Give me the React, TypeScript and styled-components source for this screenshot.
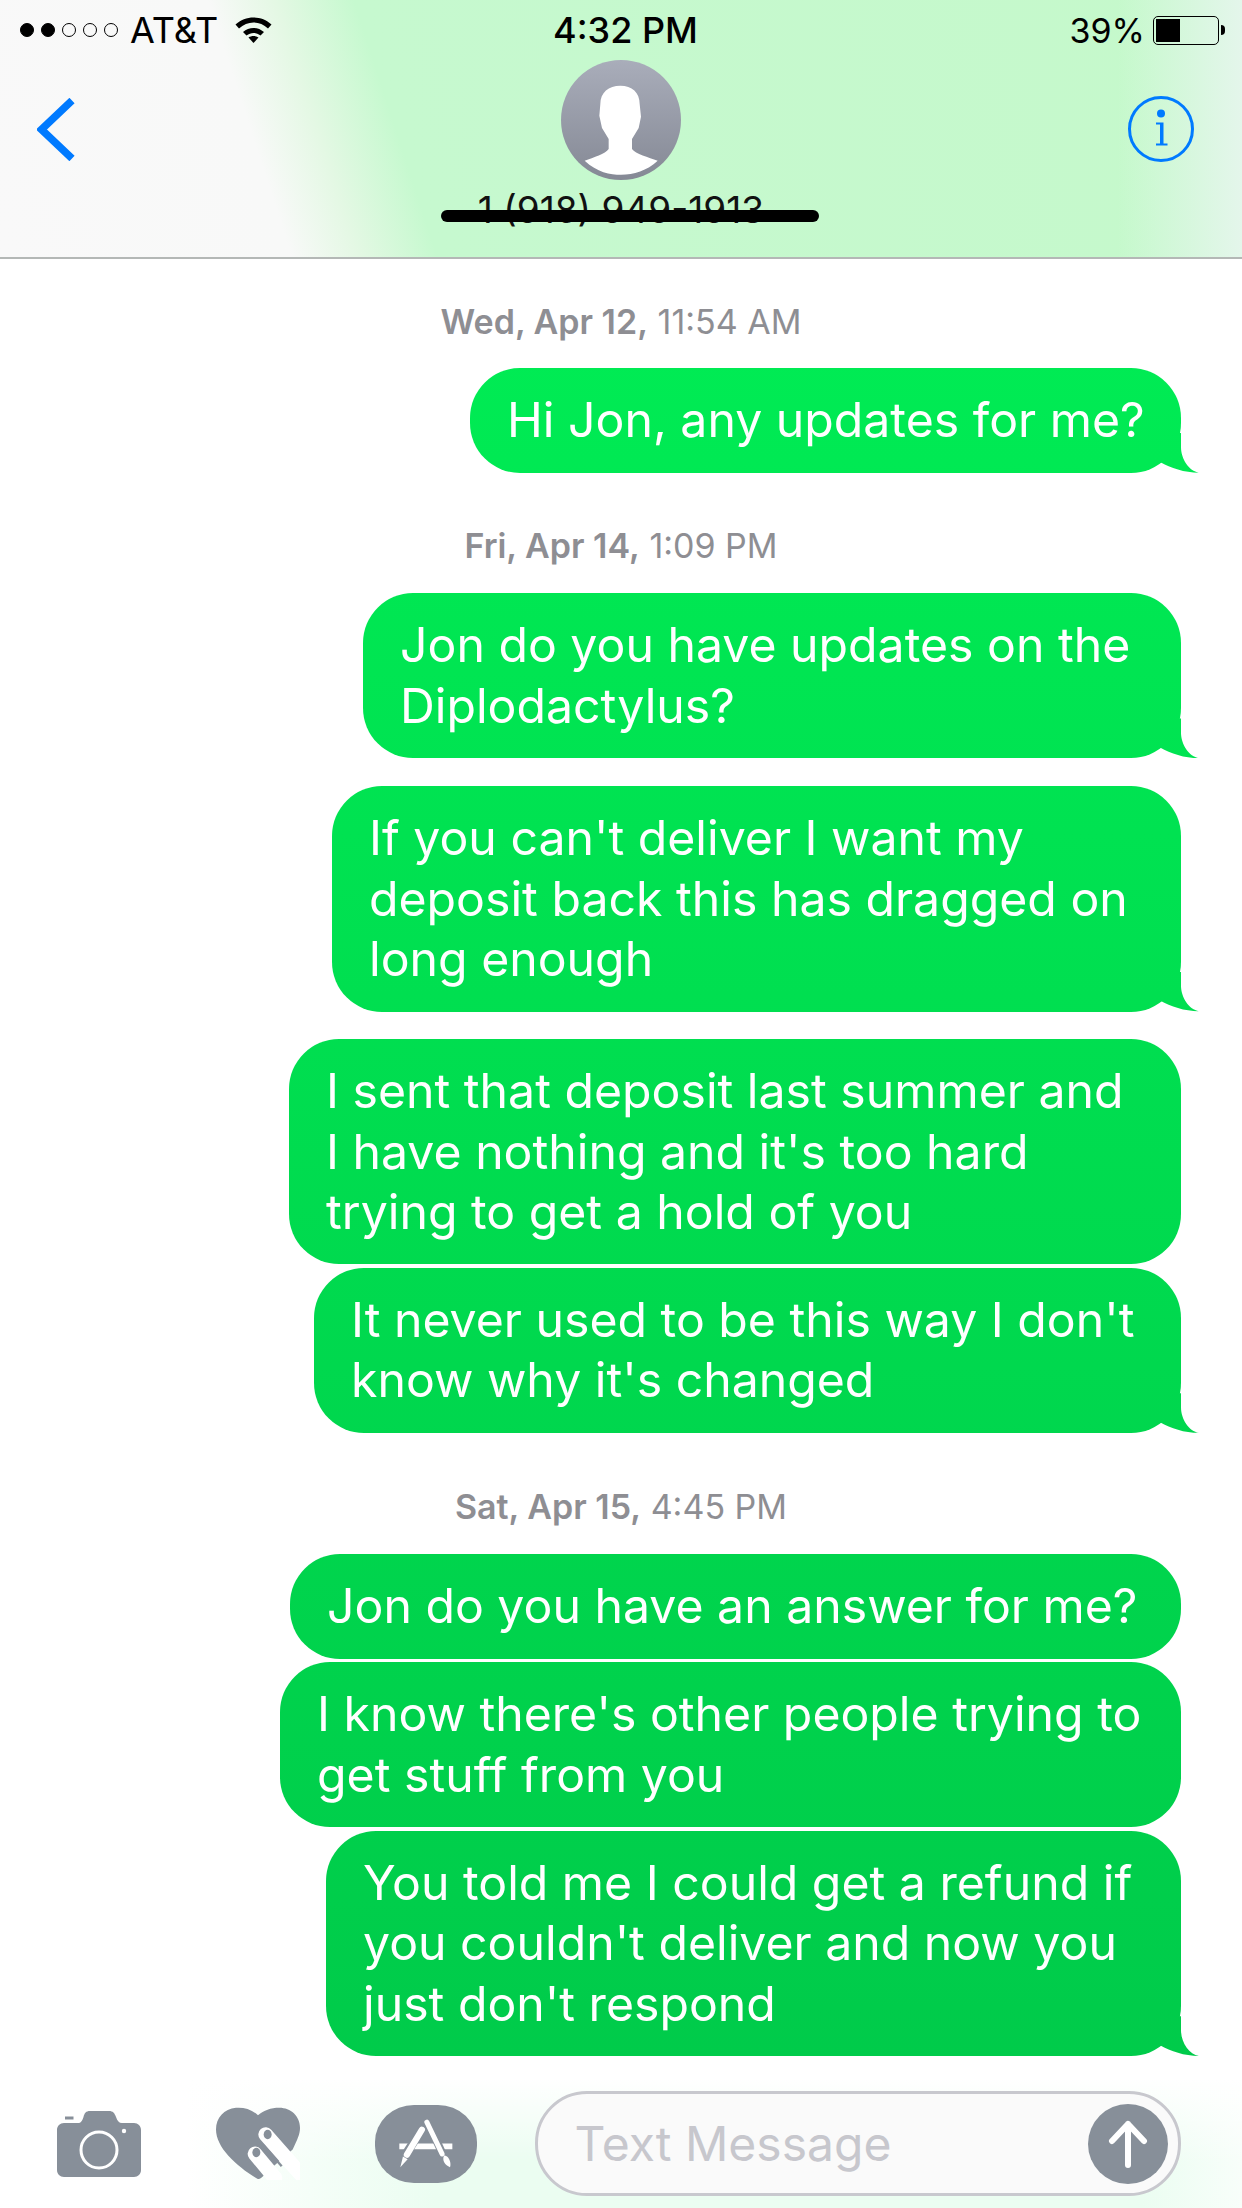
import React from "react";
import styled, { createGlobalStyle } from "styled-components";

const GlobalStyle = createGlobalStyle`
    html, body {
        margin: 0;
        padding: 0;
        background: #fff;
    }
    body {
        font-family: "Inter", "Liberation Sans", sans-serif;
    }
`;

type Line = { text: string; tail?: boolean; gap: number; width: number };

const App: React.FC = () => (
    <Screen>
        <GlobalStyle />
        <Header>
            <StatusBar>
                <StatusLeft>
                    <Signal>
                        {[true, true, false, false, false].map((on, i) => (
                            <SignalDot key={i} $on={on} />
                        ))}
                    </Signal>
                    <Carrier>AT&amp;T</Carrier>
                    <svg width="37" height="26" viewBox="0 0 36 26" fill="#000">
                        <path d="M0 7.5C10-2 26-2 36 7.5L32.5 11.5C24 3.5 12 3.5 3.5 11.5Z" />
                        <path d="M7.5 15C13.5 9.5 22.5 9.5 28.5 15L25 18.5C20.5 15 15.5 15 11 18.5Z" />
                        <path d="M13 20.5C16 18.5 20 18.5 23 20.5L18 26Z" />
                    </svg>
                </StatusLeft>
                <Clock>4:32 PM</Clock>
                <StatusRight>
                    <Percent>39%</Percent>
                    <Battery>
                        <BatteryFill />
                    </Battery>
                    <BatteryNub />
                </StatusRight>
            </StatusBar>
            <NavBar>
                <BackIcon width="38" height="63" viewBox="0 0 38 63">
                    <path d="M35 2.5L4.5 31.5L35 60.5" fill="none" stroke="#007aff" strokeWidth="7.5" />
                </BackIcon>
                <Contact>
                    <svg width="120" height="120" viewBox="32 28 360 360">
                        <defs>
                            <linearGradient id="avatarFill" x1="0" y1="0" x2="0" y2="1">
                                <stop offset="0" stopColor="#a9adba" />
                                <stop offset="1" stopColor="#858995" />
                            </linearGradient>
                        </defs>
                        <circle cx="212" cy="208" r="180" fill="url(#avatarFill)" />
                        <path
                            d="M210 105C175 105 150 125 150 160L147 195 155 232 175 265 175 295C165 310 130 320 103 330C140 365 180 372 212 372C250 372 290 360 322 330C295 320 255 310 245 295L245 265 265 232 272 198 268 160C268 125 245 105 210 105Z"
                            fill="#fff"
                        />
                    </svg>
                    <PhoneNumber>
                        1 (918) 949-1913
                        <Redaction />
                    </PhoneNumber>
                </Contact>
                <InfoIcon width="68" height="68" viewBox="0 0 68 68">
                    <circle cx="34" cy="34" r="31.5" fill="none" stroke="#007aff" strokeWidth="3" />
                    <circle cx="34" cy="18.5" r="4" fill="#007aff" />
                    <path d="M29 27.5H36.5V48.5H40.5V50.5H29V48.5H33V29.5H29Z" fill="#007aff" />
                </InfoIcon>
            </NavBar>
        </Header>

        <Thread>
            <Stamp $gap={43}>
                <b>Wed, Apr 12,</b> 11:54 AM
            </Stamp>
            <MessageList items={first} />
            <Stamp $gap={53}>
                <b>Fri, Apr 14,</b> 1:09 PM
            </Stamp>
            <MessageList items={second} />
            <Stamp $gap={53.5}>
                <b>Sat, Apr 15,</b> 4:45 PM
            </Stamp>
            <MessageList items={third} />
        </Thread>

        <Toolbar>
            <svg width="84" height="66" viewBox="0 0 84 66">
                <path
                    d="M7 12H21C24 12 25 10 26.5 6C27.5 2 29 0 33 0H52C56 0 57.5 2 59 6C60.5 10 62 12 65 12H77C81 12 84 15 84 19V59C84 63 81 66 77 66H7C3 66 0 63 0 59V19C0 15 3 12 7 12Z"
                    fill="#878f99"
                />
                <rect x="8" y="5.5" width="8.5" height="3" fill="#878f99" />
                <circle cx="42" cy="39" r="18" fill="none" stroke="#fff" strokeWidth="3" />
                <circle cx="67" cy="20" r="2.2" fill="#fff" />
            </svg>
            <svg width="84" height="73" viewBox="48 38 252 218">
                <path
                    d="M174 62C155 44 130 38 108 40C72 44 48 70 48 105C48 160 110 215 172 253C178 255 185 252 195 238L278 165C292 135 300 120 300 100C300 65 272 40 238 40C212 40 192 48 174 62Z"
                    fill="#878f99"
                />
                <path d="M197 120L300 237" stroke="#fff" strokeWidth="44" strokeLinecap="round" />
                <path d="M165 178L225 250" stroke="#fff" strokeWidth="44" strokeLinecap="round" />
                <path d="M245 215L188 150" stroke="#878f99" strokeWidth="7" />
                <ellipse cx="203" cy="120" rx="12" ry="14" fill="#878f99" />
                <ellipse cx="169" cy="174" rx="12" ry="14" fill="#878f99" />
            </svg>
            <StoreIcon>
                <svg width="58" height="50" viewBox="590 65 175 150">
                    <path d="M597 147H757" stroke="#fff" strokeWidth="17" />
                    <path d="M665 95L612 178" stroke="#878f99" strokeWidth="26" />
                    <path d="M682 72L730 175" stroke="#878f99" strokeWidth="24" />
                    <path d="M665 97L620 172" stroke="#fff" strokeWidth="19" strokeLinecap="round" />
                    <path d="M608 178L622 186L600 210Z" fill="#fff" />
                    <path d="M680 74L726 170" stroke="#fff" strokeWidth="15" strokeLinecap="round" />
                    <path d="M732 175C745 175 755 195 750 210C735 205 725 190 732 175Z" fill="#fff" />
                </svg>
            </StoreIcon>
            <InputBox>
                <Placeholder>Text Message</Placeholder>
                <SendButton>
                    <svg width="40" height="48" viewBox="0 0 40 48">
                        <path
                            d="M20 45V4M4 21L20 4L36 21"
                            fill="none"
                            stroke="#fff"
                            strokeWidth="6"
                            strokeLinecap="round"
                            strokeLinejoin="round"
                        />
                    </svg>
                </SendButton>
            </InputBox>
        </Toolbar>
    </Screen>
);

const MessageList: React.FC<{ items: Line[] }> = ({ items }) => (
    <>
        {items.map(item => (
            <Bubble key={item.text} $gap={item.gap} $width={item.width} $tail={item.tail}>
                {item.text.split("\n").map(line => (
                    <BubbleLine key={line}>{line}</BubbleLine>
                ))}
            </Bubble>
        ))}
    </>
);

const first: Line[] = [{ text: "Hi Jon, any updates for me?", tail: true, gap: 26, width: 711 }];

const second: Line[] = [
    { text: "Jon do you have updates on the\nDiplodactylus?", tail: true, gap: 27, width: 818 },
    { text: "If you can't deliver I want my\ndeposit back this has dragged on\nlong enough", tail: true, gap: 27.4, width: 849 },
    { text: "I sent that deposit last summer and\nI have nothing and it's too hard\ntrying to get a hold of you", gap: 27.3, width: 892 },
    { text: "It never used to be this way I don't\nknow why it's changed", tail: true, gap: 3.3, width: 867 },
];

const third: Line[] = [
    { text: "Jon do you have an answer for me?", gap: 27, width: 891 },
    { text: "I know there's other people trying to\nget stuff from you", gap: 3.2, width: 901 },
    { text: "You told me I could get a refund if\nyou couldn't deliver and now you\njust don't respond", tail: true, gap: 3.3, width: 855 },
];

export default App;

/* ~~~~~~ -- styling -- ~~~~~~ */

const bubbleFill = "linear-gradient(#00ec54 0, #00ec54 300px, #00cb4a 2060px, #00cb4a 2208px) fixed";

const Screen = styled.div`
    width: 1242px;
    height: 2208px;
    overflow: hidden;
    display: flex;
    flex-direction: column;
    background: #fff;
`;

const Header = styled.header`
    height: 259px;
    box-sizing: border-box;
    border-bottom: 2px solid #b4b8b6;
    background:
        linear-gradient(90deg, rgba(228, 246, 235, 0) 90%, #e4f6eb 100%),
        linear-gradient(72deg, #f9f9f9 0%, #f8f9f8 22%, #e4f8e4 27%, #c6f9cf 33%, #c5f9cb 100%);
`;

const StatusBar = styled.div`
    height: 60px;
    display: grid;
    grid-template-columns: 1fr auto 1fr;
    align-items: center;
    padding: 0 17px 0 20px;
    color: #000;
`;

const StatusLeft = styled.div`
    display: flex;
    align-items: center;
`;

const Signal = styled.div`
    display: flex;
    gap: 7px;
    margin-right: 12px;
`;

const SignalDot = styled.span<{ $on: boolean }>`
    width: 14px;
    height: 14px;
    box-sizing: border-box;
    border-radius: 50%;
    border: 1.5px solid #000;
    background: ${props => (props.$on ? "#000" : "transparent")};
`;

const Carrier = styled.span`
    font-size: 36px;
    margin-right: 17px;
`;

const Clock = styled.span`
    font-size: 36px;
    font-weight: 500;
    margin-left: 6px;
`;

const StatusRight = styled.div`
    display: flex;
    align-items: center;
    justify-content: flex-end;
`;

const Percent = styled.span`
    font-size: 34px;
    margin-right: 8px;
`;

const Battery = styled.div`
    width: 66px;
    height: 29px;
    box-sizing: border-box;
    border: 1.5px solid #000;
    border-radius: 5px;
    padding: 2px;
`;

const BatteryFill = styled.div`
    width: 24px;
    height: 100%;
    background: #000;
`;

const BatteryNub = styled.div`
    width: 4px;
    height: 10px;
    margin-left: 2px;
    background: #000;
    border-radius: 0 4px 4px 0;
`;

const NavBar = styled.div`
    height: 197px;
    box-sizing: border-box;
    display: grid;
    grid-template-columns: 1fr auto 1fr;
    align-items: start;
    padding: 0 47px 0 37px;
`;

const BackIcon = styled.svg`
    margin-top: 38px;
`;

const InfoIcon = styled.svg`
    justify-self: end;
    margin-top: 35px;
`;

const Contact = styled.div`
    display: flex;
    flex-direction: column;
    align-items: center;
    margin-left: 10px;
`;

const PhoneNumber = styled.div`
    position: relative;
    margin-top: 10px;
    font-size: 37px;
    line-height: 40px;
    color: #111;
    white-space: nowrap;
`;

const Redaction = styled.span`
    position: absolute;
    left: -37px;
    right: -55px;
    top: 20px;
    height: 12px;
    border-radius: 6px;
    background: #000;
`;

const Thread = styled.main`
    flex: 1;
    display: flex;
    flex-direction: column;
    align-items: flex-end;
`;

const Stamp = styled.div<{ $gap: number }>`
    align-self: center;
    margin-top: ${props => props.$gap}px;
    font-size: 34px;
    line-height: 40px;
    color: #8e8e93;
    white-space: nowrap;
    b {
        font-weight: 600;
    }
`;

const Bubble = styled.div<{ $gap: number; $width: number; $tail?: boolean }>`
    position: relative;
    width: ${props => props.$width}px;
    box-sizing: border-box;
    margin: ${props => props.$gap}px 61px 0 0;
    padding: 22.4px 20px 22.4px 37px;
    border-radius: 50px;
    font-size: 48.2px;
    line-height: 60.3px;
    color: #fff;
    background: ${bubbleFill};
    &::after {
        content: ${props => (props.$tail ? '""' : "none")};
        position: absolute;
        right: -18px;
        bottom: 0;
        width: 50px;
        height: 40px;
        background: ${bubbleFill};
        clip-path: path("M32 0V14C32 26 40 38 50 39.7C35 39.7 22 35 11 29L0 0Z");
    }
`;

const BubbleLine = styled.div`
    white-space: nowrap;
`;

const Toolbar = styled.footer`
    height: 152px;
    box-sizing: border-box;
    display: flex;
    align-items: center;
    padding: 29px 61px 6px 57px;
    background:
        linear-gradient(180deg, #fff 15%, rgba(255, 255, 255, 0) 70%),
        linear-gradient(90deg, #fff 15%, #ebfdf1 35%, #ebfdf1 92%, #f8fefa 100%);
    > svg {
        flex-shrink: 0;
    }
    > svg + svg {
        margin-left: 75px;
    }
`;

const StoreIcon = styled.div`
    flex-shrink: 0;
    width: 102px;
    height: 78px;
    margin: 0 58px 0 75px;
    display: flex;
    align-items: center;
    justify-content: center;
    border-radius: 39px / 37px;
    background: #878f99;
`;

const InputBox = styled.div`
    flex: 1;
    height: 105px;
    box-sizing: border-box;
    display: flex;
    align-items: center;
    justify-content: space-between;
    padding: 0 10px 0 36.5px;
    border: 3.5px solid #c8c8ce;
    border-radius: 52px;
    background: #fafafa;
`;

const Placeholder = styled.span`
    font-size: 48px;
    color: #c7c7cd;
`;

const SendButton = styled.div`
    width: 80px;
    height: 80px;
    display: flex;
    align-items: center;
    justify-content: center;
    border-radius: 50%;
    background: #878f99;
`;
